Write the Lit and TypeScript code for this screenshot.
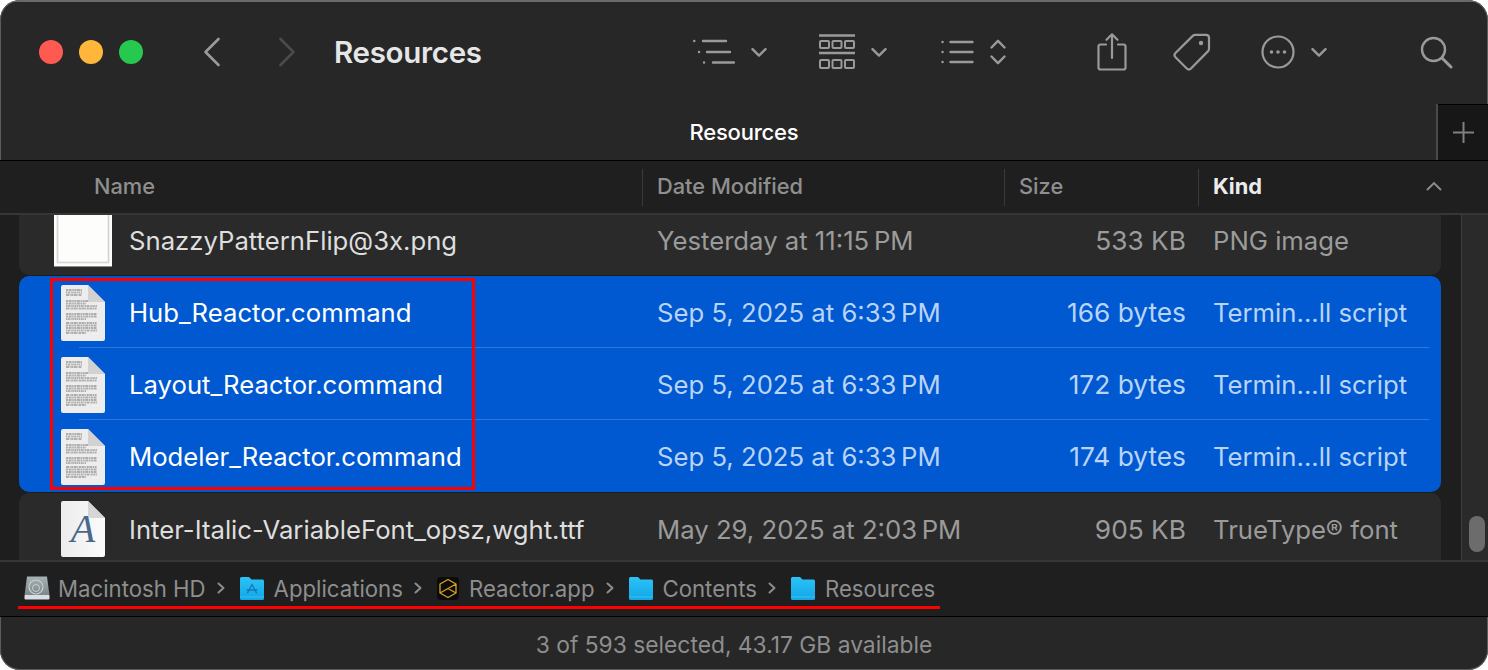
import { LitElement, html, css, svg } from "lit";
import { customElement } from "lit/decorators.js";

const chev = (w = 16, h = 9) => html`<svg class="chev" width=${w} height=${h} viewBox="0 0 16 9"><path d="M1.5 1.2 8 7.6l6.5-6.4" fill="none" stroke="#9a9a9a" stroke-width="2.4" stroke-linecap="round" stroke-linejoin="round"/></svg>`;

const docLines = () => {
  const ys = [6, 8.5, 11, 17, 19.5, 22, 24.5, 30, 32.5, 35, 39, 41.5, 44, 46.5, 49];
  const dashes = ["2 .6 3 .6 1.500 .6", "1.500 .6 2 .6 1 .6", "3 .6 1 .6 2 .6", "2 .6 3 .6 1.500 .6"];
  return ys.map((y, i) => {
    const end = y < 12 ? 22 : i % 5 === 4 ? 26 : 37;
    return svg`<line x1="6" x2=${end} y1=${y} y2=${y} stroke="#adadad" stroke-width="1.900" stroke-dasharray=${dashes[i % 4]}/>`;
  });
};

const docIcon = () => html`<svg width="46" height="58" viewBox="0 0 46 58" class="ic">
  <path d="M3 1h25l17 17v37a2 2 0 0 1-2 2H3a2 2 0 0 1-2-2V3a2 2 0 0 1 2-2z" fill="#ededed"/>
  ${docLines()}
  <path d="M28 1l17 17H31a3 3 0 0 1-3-3z" fill="#d2d2d2"/>
</svg>`;

const fontIcon = () => html`<svg width="46" height="58" viewBox="0 0 46 58" class="ic">
  <defs><linearGradient id="fg" x1="0" x2="1" y1="0" y2="0"><stop offset="0" stop-color="#ececec"/><stop offset="1" stop-color="#fbfbfb"/></linearGradient></defs>
  <path d="M3 1h25l17 17v37a2 2 0 0 1-2 2H3a2 2 0 0 1-2-2V3a2 2 0 0 1 2-2z" fill="url(#fg)"/>
  <path d="M28 1l17 17H31a3 3 0 0 1-3-3z" fill="#d6d6d6"/>
  <text x="23" y="42" text-anchor="middle" font-family="Liberation Serif" font-style="italic" font-size="40" fill="#4a678c">A</text>
</svg>`;

const imgIcon = () => html`<svg width="58" height="56" viewBox="0 0 58 56" class="ic">
  <rect x="0" y="0" width="58" height="54" fill="#fdfdfb"/>
  <path d="M3.500 0v50.500h51V0" fill="none" stroke="#d4d4d4" stroke-width="1.600"/>
  <rect y="54" width="58" height="1" fill="#8a8a8a"/>
</svg>`;

const folder = (app = false) => html`<svg width="24" height="23" viewBox="0 0 24 23">
  <defs><linearGradient id="fo" x1="0" x2="0" y1="0" y2="1"><stop offset="0" stop-color="#2cc3f7"/><stop offset="1" stop-color="#12a6e6"/></linearGradient></defs>
  <path d="M1.500 0h7.500l2.500 2.500H22.500A1.500 1.500 0 0 1 24 4v17.500a1.500 1.500 0 0 1-1.500 1.500h-21A1.500 1.500 0 0 1 0 21.500V1.500A1.500 1.500 0 0 1 1.500 0z" fill="url(#fo)"/>
  <rect y="19.500" width="24" height="1" fill="#5fd0f7" opacity=".6"/>
  ${app ? svg`<path d="M12 7.500 7.500 16M12 7.500 16.500 16M7 13h10" fill="none" stroke="#1378bb" stroke-width="1.300" stroke-linecap="round"/>` : ""}
</svg>`;

const hdIcon = () => html`<svg width="26" height="24" viewBox="0 0 26 24">
  <defs><linearGradient id="hd" x1="0" x2="0" y1="0" y2="1"><stop offset="0" stop-color="#a7b2b5"/><stop offset="1" stop-color="#7b8689"/></linearGradient></defs>
  <path d="M3 .5h20l2.500 19H.5z" fill="url(#hd)"/>
  <rect x=".5" y="19" width="25" height="4.500" rx="1" fill="#d7dfe2"/>
  <circle cx="12" cy="11" r="7" fill="none" stroke="#c8d1d3" stroke-width="1.200"/>
  <circle cx="12" cy="12" r="3.500" fill="none" stroke="#c8d1d3" stroke-width="1"/>
</svg>`;

const reactorIcon = () => html`<svg width="22" height="23" viewBox="0 0 22 23">
  <rect width="22" height="23" rx="4" fill="#0b0b0b"/>
  <path d="M11 2.500 19 7v9l-8 4.500L3 16V7zM3 16l16-9M11 11.500l8 4.500" fill="none" stroke="#d9a520" stroke-width="1.300" stroke-linejoin="round"/>
</svg>`;

const pathSep = () => html`<svg class="sep" width="8" height="12" viewBox="0 0 8 12"><path d="M1.500 1.500 6.500 6l-5 4.500" fill="none" stroke="#8d8d8d" stroke-width="2" stroke-linecap="round" stroke-linejoin="round"/></svg>`;

type Row = { name: string; date: string; size: string; kind: string; icon: () => unknown };

const stamp = "Sep 5, 2025 at 6:33\u202FPM";
const selected: Row[] = [
  { name: "Hub_Reactor.command", date: stamp, size: "166 bytes", kind: "Termin...ll script", icon: docIcon },
  { name: "Layout_Reactor.command", date: stamp, size: "172 bytes", kind: "Termin...ll script", icon: docIcon },
  { name: "Modeler_Reactor.command", date: stamp, size: "174 bytes", kind: "Termin...ll script", icon: docIcon },
];

@customElement("app-root")
export class AppRoot extends LitElement {
  static styles = css`
    :host { display: block; width: 1488px; height: 670px; background: #fff; overflow: hidden; }
    * { box-sizing: border-box; }
    .win { position: relative; width: 1488px; height: 670px; border-radius: 20px; overflow: hidden; background: #272727; display: flex; flex-direction: column; font-family: Inter, "Noto Sans", sans-serif; box-shadow: inset 0 0 0 1px #5c5c5c; }
    .toolbar { height: 104px; flex: none; display: flex; align-items: center; padding: 0 0 0 39px; box-shadow: inset 0 2px 0 #6a6a6a; }
    .lights { display: flex; gap: 16px; }
    .light { width: 24px; height: 24px; border-radius: 50%; }
    .r { background: #ff5a52; } .y { background: #ffb63b; } .g { background: #27c84f; }
    .nav { display: flex; gap: 57px; margin-left: 60px; }
    .title { margin-left: 38px; width: 359px; font-size: 29.500px; font-weight: 600; color: #e6e6e6; letter-spacing: -0.3px; }
    .tools { display: flex; align-items: center; }
    .tg { display: flex; align-items: center; gap: 16px; }
    .t2 { margin-left: 52px; }
    .t3 { margin-left: 54px; }
    .t4 { margin-left: 91px; }
    .t5 { margin-left: 46px; }
    .t6 { margin-left: 50px; }
    .t7 { margin-left: 93px; }
    .tabs { height: 57px; flex: none; display: flex; border-bottom: 1px solid #000; }
    .tab { flex: 1; text-align: center; color: #fff; font-size: 22px; font-weight: 500; line-height: 56px; letter-spacing: -0.2px; padding-left: 52px; }
    .plus { width: 52px; background: #171717; border-left: 2px solid #4a4a4a; box-shadow: inset 0 1px 0 #000; display: flex; align-items: center; justify-content: center; }
    .head { height: 54px; flex: none; background: #1f1f1f; border-bottom: 2px solid #363636; display: flex; align-items: center; padding-left: 94px; color: #8f8f8f; font-size: 21.800px; font-weight: 500; }
    .head .c { display: flex; align-items: center; height: 37px; padding-bottom: 2px; }
    .c1 { width: 548px; }
    .c2 { width: 362px; }
    .c3 { width: 194px; }
    .c4 { width: 263px; color: #ececec; font-weight: 700; display: flex; justify-content: space-between; }
    .c2, .c3, .c4 { border-left: 1px solid #3a3a3a; padding-left: 14px; }
    .body { height: 345px; flex: none; display: flex; overflow: hidden; background: #1e1e1e; }
    .list { width: 1461px; flex: none; padding-left: 19px; padding-right: 20px; overflow: hidden; }
    .rows { margin-top: -11px; }
    .row { height: 72px; display: grid; grid-template-columns: 58px 545px 343px 186px 1fr; align-items: center; padding-left: 35px; font-size: 25.700px; color: #9b9b9b; white-space: nowrap; }
    .row .ic { justify-self: center; display: block; }
    .row .n { color: #dedede; padding-left: 17px; }
    .row .s { text-align: right; font-size: 26.300px; }
    .row .k { padding-left: 27px; }
    .stripe { background: #2a2a2a; border-radius: 10px; }
    .first { height: 71px; margin-bottom: 1px; border-radius: 0 0 10px 10px; padding-top: 1px; }
    .first > div { padding-top: 1px; }
    .last { margin-top: 1px; border-radius: 10px 10px 0 0; }
    .sel { background: #0059d1; border-radius: 10px; }
    .sel .row { color: #bad4f7; position: relative; padding-top: 1px; }
    .sel .row .n { color: #fff; }
    .sel .row + .row::before { content: ""; position: absolute; left: 60px; right: 12px; top: -1px; height: 1px; background: #2f78dc; }
    .track { flex: 1; background: #2a2a2a; border-left: 1px solid #3d3d3d; padding: 301px 0 0 7px; }
    .thumb { width: 16px; height: 36px; border-radius: 8px; background: #6c6c6c; }
    .path { height: 57px; flex: none; background: #1f1f1f; border-top: 2px solid #363636; border-bottom: 1px solid #000; display: flex; align-items: center; padding-left: 24px; padding-bottom: 2px; color: #8e8e8e; font-size: 22.200px; white-space: nowrap; }
    .p { display: flex; align-items: center; gap: 10px; }
    .p.hd { gap: 8px; }
    .sep { margin: 0 15px 0 11px; flex: none; }
    .status { height: 54px; flex: none; display: flex; align-items: center; justify-content: center; color: #8e8e8e; font-size: 22.800px; padding-right: 20px; white-space: nowrap; }
    .mark { position: absolute; border: 3px solid #f00; left: 50px; top: 278px; width: 425px; height: 212px; pointer-events: none; }
    .line { position: absolute; left: 18px; top: 606px; width: 922px; height: 3px; background: #f00; }
  `;

  private row(r: Row, cls = "") {
    return html`<div class="row ${cls}">${r.icon()}<div class="n">${r.name}</div><div>${r.date}</div><div class="s">${r.size}</div><div class="k">${r.kind}</div></div>`;
  }

  render() {
    const g = "#9a9a9a";
    return html`<div class="win">
      <div class="toolbar">
        <div class="lights"><div class="light r"></div><div class="light y"></div><div class="light g"></div></div>
        <div class="nav">
          <svg width="18" height="30" viewBox="0 0 18 30"><path d="M15.500 2 2.500 15l13 13" fill="none" stroke="#9a9a9a" stroke-width="2.600" stroke-linecap="round" stroke-linejoin="round"/></svg>
          <svg width="18" height="30" viewBox="0 0 18 30"><path d="M2.500 2l13 13-13 13" fill="none" stroke="#4b4b4b" stroke-width="2.600" stroke-linecap="round" stroke-linejoin="round"/></svg>
        </div>
        <div class="title">Resources</div>
        <div class="tools">
          <div class="tg">
            <svg width="42" height="26" viewBox="0 0 42 26"><g fill="none" stroke=${g} stroke-width="2.400" stroke-linecap="round"><path d="M1.200 2h.1M10 2h23M6 13h.1M14 13h23M11 23.500h.1M20 23.500h21"/></g></svg>
            ${chev()}
          </div>
          <div class="tg t2">
            <svg width="36" height="36" viewBox="0 0 36 36"><g fill="none" stroke=${g} stroke-width="2"><path d="M0 1.500h36M0 19h36" stroke-width="2.400"/><rect x="1" y="7" width="9" height="7" rx="1"/><rect x="13.500" y="7" width="9" height="7" rx="1"/><rect x="26" y="7" width="9" height="7" rx="1"/><rect x="1" y="26" width="9" height="8" rx="1"/><rect x="13.500" y="26" width="9" height="8" rx="1"/><rect x="26" y="26" width="9" height="8" rx="1"/></g></svg>
            ${chev()}
          </div>
          <div class="tg t3">
            <svg width="33" height="24" viewBox="0 0 33 24"><g fill="none" stroke=${g} stroke-width="2.400" stroke-linecap="round"><path d="M1.500 2h.1M1.500 12h.1M1.500 22h.1M9.500 2h22M9.500 12h22M9.500 22h22"/></g></svg>
            <svg width="16" height="26" viewBox="0 0 16 26"><path d="M1.500 8.500 8 1.800l6.500 6.700M1.500 17.500 8 24.200l6.500-6.700" fill="none" stroke=${g} stroke-width="2.400" stroke-linecap="round" stroke-linejoin="round"/></svg>
          </div>
          <svg class="t4" width="30" height="38" viewBox="0 0 30 38"><path d="M9 11.500H3.500a2 2 0 0 0-2 2v21a2 2 0 0 0 2 2h23a2 2 0 0 0 2-2v-21a2 2 0 0 0-2-2H21M15 25V1.500M9.500 6.800 15 1.300l5.500 5.500" fill="none" stroke=${g} stroke-width="2.200" stroke-linecap="round" stroke-linejoin="round"/></svg>
          <svg class="t5" width="38" height="38" viewBox="0 0 38 38"><path d="M22 1.800h11a3 3 0 0 1 3 3V16a3 3 0 0 1-.9 2.100L18 35.500a3 3 0 0 1-4.200 0L2.500 24.200a3 3 0 0 1 0-4.200L20 2.600A3 3 0 0 1 22 1.800z" fill="none" stroke=${g} stroke-width="2.200" stroke-linejoin="round"/><circle cx="28" cy="10" r="2.200" fill=${g}/></svg>
          <div class="tg t6">
            <svg width="34" height="34" viewBox="0 0 34 34"><circle cx="17" cy="17" r="15.500" fill="none" stroke=${g} stroke-width="2.200"/><circle cx="10.500" cy="17" r="1.800" fill=${g}/><circle cx="17" cy="17" r="1.800" fill=${g}/><circle cx="23.500" cy="17" r="1.800" fill=${g}/></svg>
            ${chev()}
          </div>
          <svg class="t7" width="33" height="33" viewBox="0 0 33 33"><circle cx="13.500" cy="13.500" r="11.500" fill="none" stroke=${g} stroke-width="2.400"/><path d="M22 22l9 9" stroke=${g} stroke-width="3" stroke-linecap="round"/></svg>
        </div>
      </div>
      <div class="tabs">
        <div class="tab">Resources</div>
        <div class="plus"><svg width="21" height="21" viewBox="0 0 21 21"><path d="M10.500 0v21M0 10.500h21" stroke="#808080" stroke-width="2"/></svg></div>
      </div>
      <div class="head">
        <div class="c c1">Name</div>
        <div class="c c2">Date Modified</div>
        <div class="c c3">Size</div>
        <div class="c c4"><span>Kind</span><svg style="align-self:center;margin-right:19px" width="16" height="10" viewBox="0 0 16 10"><path d="M1 9l7-7 7 7" fill="none" stroke="#8f8f8f" stroke-width="1.800"/></svg></div>
      </div>
      <div class="body">
        <div class="list"><div class="rows">
          ${this.row({ name: "SnazzyPatternFlip@3x.png", date: "Yesterday at 11:15\u202FPM", size: "533 KB", kind: "PNG image", icon: imgIcon }, "stripe first")}
          <div class="sel">${selected.map((r) => this.row(r))}</div>
          ${this.row({ name: "Inter-Italic-VariableFont_opsz,wght.ttf", date: "May 29, 2025 at 2:03\u202FPM", size: "905 KB", kind: "TrueType® font", icon: fontIcon }, "stripe last")}
        </div></div>
        <div class="track"><div class="thumb"></div></div>
      </div>
      <div class="path">
        <div class="p hd">${hdIcon()}<span>Macintosh HD</span></div>${pathSep()}
        <div class="p">${folder(true)}<span>Applications</span></div>${pathSep()}
        <div class="p">${reactorIcon()}<span>Reactor.app</span></div>${pathSep()}
        <div class="p">${folder()}<span>Contents</span></div>${pathSep()}
        <div class="p">${folder()}<span>Resources</span></div>
      </div>
      <div class="status">3 of 593 selected, 43.17 GB available</div>
      <div class="mark"></div>
      <div class="line"></div>
    </div>`;
  }
}
